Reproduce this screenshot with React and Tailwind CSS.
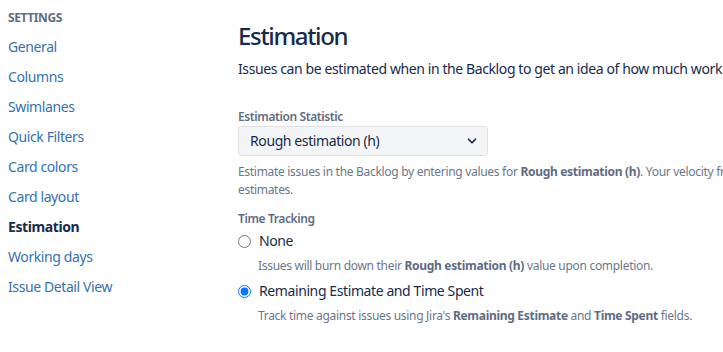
import { ChevronDown } from 'lucide-react';

const navItems = [
  'General',
  'Columns',
  'Swimlanes',
  'Quick Filters',
  'Card colors',
  'Card layout',
  'Estimation',
  'Working days',
  'Issue Detail View',
];

const Sidebar = () => (
  <div className="w-[230px] shrink-0 pl-2 pt-[11px]">
    <div className="text-xs font-bold uppercase leading-[14px] text-[#5e6c84]">Settings</div>
    <ul className="mt-[7px]">
      {navItems.map((item) => (
        <li key={item} className="h-[30px] text-sm leading-[30px]">
          {item === 'Estimation' ? (
            <span className="font-bold text-[#172b4d]">{item}</span>
          ) : (
            <a className="text-[#3572b0]">{item}</a>
          )}
        </li>
      ))}
    </ul>
  </div>
);

const RadioOption = ({ label, checked, children }) => (
  <div>
    <label className="flex h-[20px] items-center text-sm text-[#172b4d]">
      <input type="radio" name="tracking" defaultChecked={checked} className="m-0 mr-[8px] h-[13px] w-[13px]" />
      {label}
    </label>
    <p className="mt-[6px] whitespace-nowrap pl-[20px] text-xs leading-[18px] tracking-[-0.025em] text-[#6b778c]">{children}</p>
  </div>
);

export default function App() {
  return (
    <div className="flex h-[352px] w-[723px] overflow-hidden bg-white font-['Noto_Sans',sans-serif] tracking-[-0.025em]">
      <Sidebar />
      <div className="min-w-0 flex-1 overflow-hidden pl-[8px] pt-[20px]">
        <h1 className="whitespace-nowrap text-2xl font-medium leading-[32px] tracking-[-0.055em] text-[#172b4d]">Estimation</h1>
        <p className="mt-[7px] whitespace-nowrap text-sm leading-[20px] text-[#172b4d]">
          Issues can be estimated when in the Backlog to get an idea of how much work is in the Backlog and how fast the team is going.
        </p>
        <div className="mt-[30px] text-xs font-semibold leading-[16px] text-[#5e6c84]">Estimation Statistic</div>
        <div className="mt-[1px] flex h-[30px] w-[250px] items-center justify-between rounded-[3px] border border-[#dfe1e6] bg-[#f4f5f7] pl-[11px] pr-[8px] text-sm text-[#172b4d]">
          <span>Rough estimation (h)</span>
          <ChevronDown size={14} strokeWidth={3} className="text-[#172b4d]" />
        </div>
        <p className="mt-[7px] whitespace-nowrap text-xs leading-[18px] tracking-[-0.025em] text-[#6b778c]">
          Estimate issues in the Backlog by entering values for <b className="text-[#5e6c84]">Rough estimation (h)</b>. Your velocity from completed sprints will be based on these
          <br />
          estimates.
        </p>
        <div className="mt-[12px] text-xs font-semibold leading-[16px] text-[#5e6c84]">Time Tracking</div>
        <div className="mt-[4px] flex flex-col gap-[6px]">
          <RadioOption label="None">
            Issues will burn down their <b className="text-[#5e6c84]">Rough estimation (h)</b> value upon completion.
          </RadioOption>
          <RadioOption label="Remaining Estimate and Time Spent" checked>
            Track time against issues using Jira's <b className="text-[#5e6c84]">Remaining Estimate</b> and{' '}
            <b className="text-[#5e6c84]">Time Spent</b> fields.
          </RadioOption>
        </div>
      </div>
    </div>
  );
}
